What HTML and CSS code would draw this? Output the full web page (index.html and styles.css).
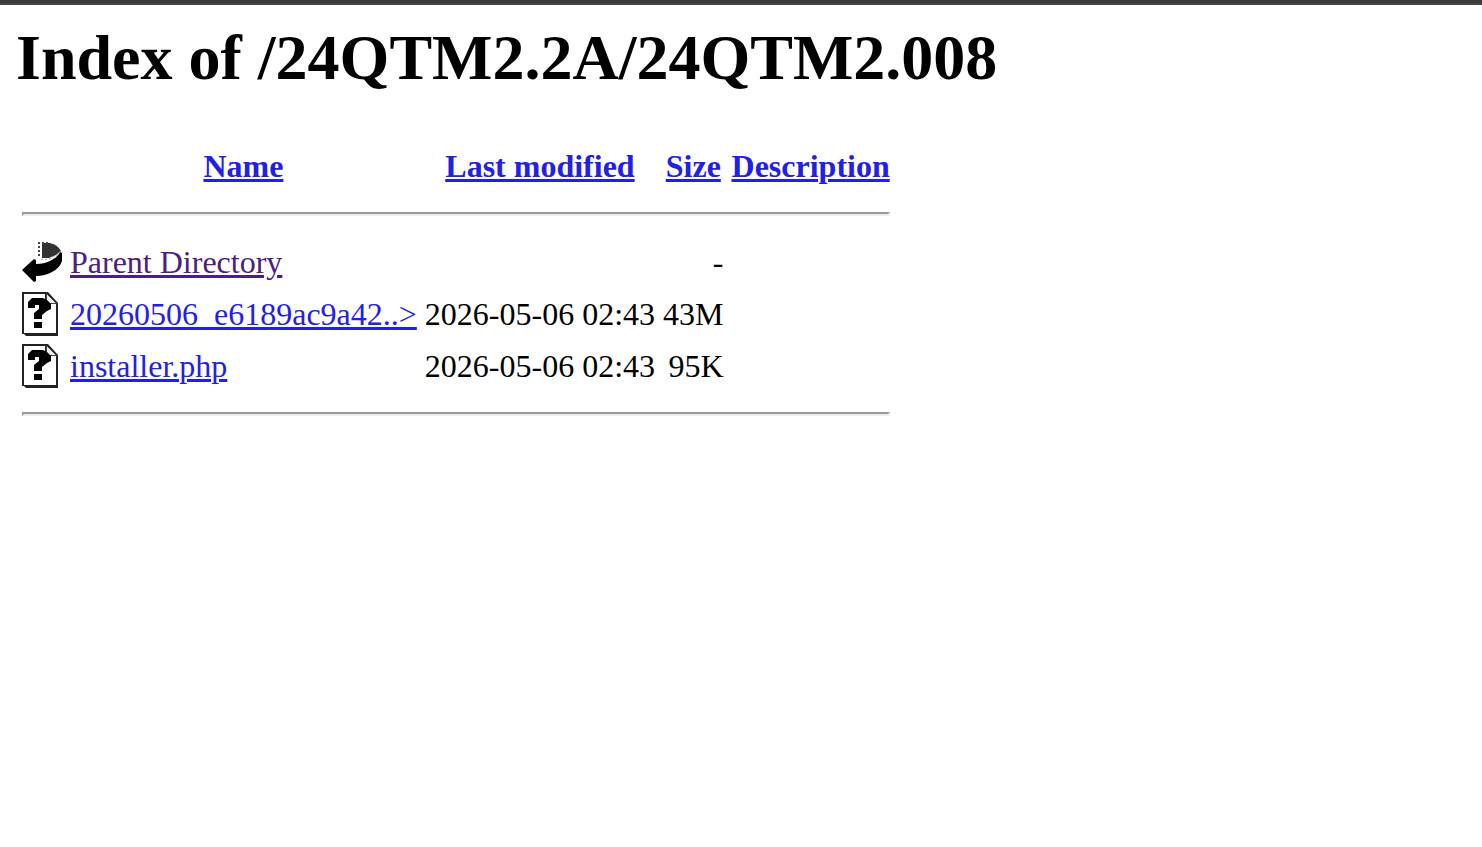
FILE: index.html
```html
<!DOCTYPE html>
<html lang="en">
<head>
<meta charset="utf-8">
<title>Index of /24QTM2.2A/24QTM2.008</title>
<link rel="stylesheet" href="styles.css">
</head>
<body>
<svg class="symbols" aria-hidden="true">
  <symbol id="back" viewBox="0 0 40 44">
    <path fill="#333" d="M20 3h8q8 2 11 8l-5 4-7 3h-7z"/>
    <path fill="none" stroke="#444" stroke-width="2" stroke-dasharray="2 2" d="M16 3h12M16 7h4M16 11h4M16 15h4"/>
    <path fill="#000" d="M0 30L12 19l2 1v4q8 0 14-3 8-4 10-9l2 1v8q-2 7-10 11-7 4-16 4v5l-2 1z"/>
    <path fill="none" stroke="#aaa" stroke-width="1" stroke-dasharray="2 2" d="M19 19.500q12 1 19-8"/>
  </symbol>
  <symbol id="unknown" viewBox="0 0 40 44">
    <path fill="#222" d="M0 0h26l10 11v33H4l-2-2H0z"/>
    <path fill="#fff" d="M2 2h21v10h11v29H2z"/>
    <path fill="#eee" stroke="#444" stroke-width="1" d="M24.500 1.500v10h10z"/>
    <path fill="#000" d="M6 10l4-4h11l4 2 4 4v5l-4 2-5 4v4h-8v-6l5-4v-4h-4v3H6zM12 30h8v6h-8z"/>
  </symbol>
</svg>
<div class="topbar"></div>
<main class="page">
  <h1 class="title">Index of /24QTM2.2A/24QTM2.008</h1>
  <table class="listing">
    <tr class="head">
      <th></th>
      <th><a href="#name">Name</a></th>
      <th><a href="#modified">Last modified</a></th>
      <th><a href="#size">Size</a></th>
      <th><a href="#description">Description</a></th>
    </tr>
    <tr><td colspan="5"><hr class="rule"></td></tr>
    <tr>
      <td><svg class="icon" role="img" aria-label="Parent directory"><use href="#back"/></svg></td>
      <td><a class="visited" href="#parent">Parent Directory</a></td>
      <td></td>
      <td class="num">-</td>
      <td></td>
    </tr>
    <tr>
      <td><svg class="icon" role="img" aria-label="File"><use href="#unknown"/></svg></td>
      <td><a href="#archive">20260506_e6189ac9a42..&gt;</a></td>
      <td class="num">2026-05-06 02:43</td>
      <td class="num">43M</td>
      <td></td>
    </tr>
    <tr>
      <td><svg class="icon" role="img" aria-label="File"><use href="#unknown"/></svg></td>
      <td><a href="#installer">installer.php</a></td>
      <td class="num">2026-05-06 02:43</td>
      <td class="num">95K</td>
      <td></td>
    </tr>
    <tr><td colspan="5"><hr class="rule"></td></tr>
  </table>
</main>
</body>
</html>
```
FILE: styles.css
```css
body {
  margin: 0;
  background: #fff;
  color: #000;
  font-family: "Liberation Serif", "Times New Roman", serif;
  font-size: 32px;
}
.symbols {
  display: none;
}
.topbar {
  height: 3px;
  background: #3c3c3c;
  border-bottom: 2px solid #464646;
}
.page {
  padding: 16px;
}
.title {
  margin: 0 0 43px;
  font-size: 64px;
  line-height: 74px;
}
.listing {
  border-spacing: 4px;
}
.listing th,
.listing td {
  padding: 2px;
  white-space: nowrap;
  line-height: 36px;
}
.head th {
  height: 44px;
}
.num {
  text-align: right;
}
a {
  color: #2320e6;
  text-decoration: underline;
  text-decoration-thickness: 3px;
  text-underline-offset: 2px;
}
.visited {
  color: #4b2082;
}
.icon {
  display: block;
  width: 40px;
  height: 44px;
}
.rule {
  margin: 16px 0;
  border: 2px solid;
  border-color: #9a9a9a #eee #eee #9a9a9a;
}
```
